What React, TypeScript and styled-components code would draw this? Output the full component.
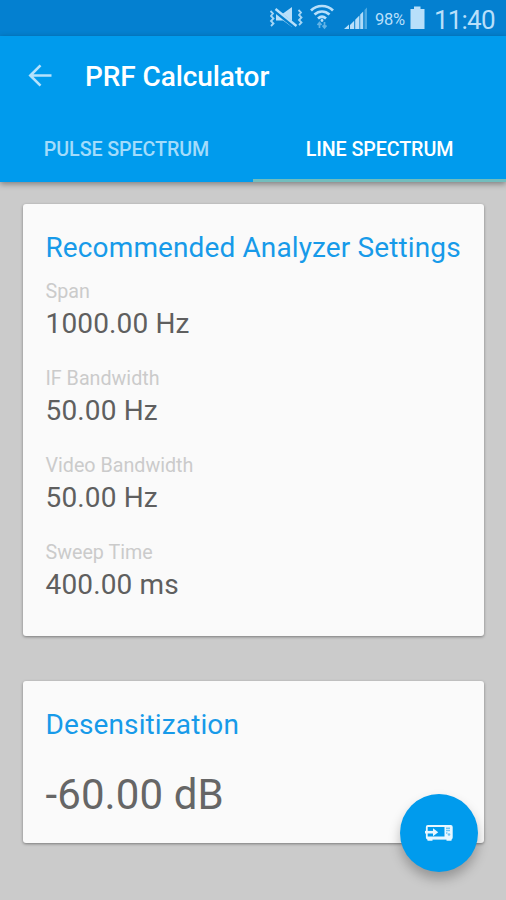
import React from 'react';
import styled, { createGlobalStyle } from 'styled-components';

const GlobalStyle = createGlobalStyle`
  * { box-sizing: border-box; }
  body { margin: 0; background: #cbcbcb; }
  button { border: 0; padding: 0; background: none; font: inherit; }
`;

const Screen = styled.div`
  position: relative;
  display: flex;
  flex-direction: column;
  width: 506px;
  height: 900px;
  overflow: hidden;
  background: #cbcbcb;
  font-family: Roboto, sans-serif;
`;

const StatusBar = styled.div`
  display: flex;
  align-items: center;
  justify-content: flex-end;
  height: 36px;
  padding-right: 11px;
  background: #0480d0;
  color: #b8dffa;
`;

const Gap = styled.span<{ $w: number }>`
  flex: none;
  width: ${(p) => p.$w}px;
`;

const StatusIcons = styled.svg`
  display: block;
  flex: none;
`;

const Battery = styled.span`
  width: 31px;
  margin-left: 7px;
  font-size: 16.5px;
  line-height: 36px;
  letter-spacing: -0.3px;
  padding-top: 3px;
`;

const Clock = styled.span`
  width: 61px;
  margin-left: 9px;
  font-size: 26px;
  line-height: 36px;
  padding-top: 3px;
  white-space: nowrap;
  letter-spacing: -0.8px;
`;

const Header = styled.header`
  position: relative;
  height: 146px;
  background: #009bed;
  box-shadow: 0 2px 6px rgba(0, 0, 0, 0.38);
`;

const Toolbar = styled.div`
  display: flex;
  align-items: center;
  height: 79px;
  padding-left: 28px;
`;

const BackButton = styled.button`
  display: flex;
  width: 57px;
`;

const Title = styled.h1`
  margin: 2px 0 0;
  color: #fff;
  font-size: 28px;
  font-weight: 500;
  line-height: 34px;
  letter-spacing: -0.1px;
`;

const Tabs = styled.nav`
  display: grid;
  grid-template-columns: 1fr 1fr;
  height: 67px;
`;

const Tab = styled.button<{ $active?: boolean }>`
  padding-top: 5px;
  color: ${(p) => (p.$active ? '#fff' : '#a3dcfb')};
  border-bottom: 3px solid ${(p) => (p.$active ? '#72bdbd' : 'transparent')};
  font-size: 19.7px;
  font-weight: 500;
  letter-spacing: -0.1px;
`;

const Content = styled.main`
  display: flex;
  flex-direction: column;
  gap: 45px;
  padding: 22px 22px 0 23px;
`;

const Card = styled.section<{ $height: number }>`
  height: ${(p) => p.$height}px;
  padding: 27px 22.5px 0;
  border-radius: 3px;
  background: #fafafa;
  box-shadow: 0 1px 3px rgba(0, 0, 0, 0.4);
`;

const CardTitle = styled.h2`
  margin: 0;
  color: #179ae9;
  font-size: 28px;
  font-weight: 400;
  line-height: 34px;
  letter-spacing: 0.12px;
  white-space: nowrap;
`;

const Settings = styled.dl`
  margin: 14px 0 0;
`;

const Setting = styled.div`
  height: 87px;
`;

const Label = styled.dt`
  color: #cbcbcb;
  font-size: 19.7px;
  line-height: 26px;
  letter-spacing: 0;
`;

const Value = styled.dd`
  margin: 2px 0 0;
  color: #5f5f5f;
  font-size: 28px;
  line-height: 34px;
  letter-spacing: 0.15px;
`;

const Reading = styled.p`
  margin: 28px 0 0;
  color: #666;
  font-size: 42px;
  line-height: 50px;
  letter-spacing: 0.1px;
`;

const Fab = styled.button`
  position: absolute;
  left: 400px;
  top: 794px;
  display: grid;
  place-items: center;
  width: 78px;
  height: 78px;
  border-radius: 50%;
  background: #009bed;
  box-shadow: 0 7px 12px rgba(0, 0, 0, 0.26);
`;

const settings = [
  ['Span', '1000.00 Hz'],
  ['IF Bandwidth', '50.00 Hz'],
  ['Video Bandwidth', '50.00 Hz'],
  ['Sweep Time', '400.00 ms'],
];

function MutedIcon() {
  return (
    <StatusIcons width="34" height="36" viewBox="0 0 34 36" fill="none">
      <path d="M7 13.500h7l9-6.500v20l-9-6.500H7z" fill="#b8dffa" />
      <path d="M5 9.500l21 17" stroke="#0480d0" strokeWidth="4.600" />
      <path d="M6.500 9l21 17" stroke="#b8dffa" strokeWidth="2.400" />
      <path d="M1.500 11l2.500 2.500L2 16l2.500 2.500L2 21l2.500 2.500L2 26M29.500 10l2.500 2.500L30 15l2.500 2.500L30 20l2.500 2.500L30 25" stroke="#a5d5f5" strokeWidth="1.800" />
    </StatusIcons>
  );
}

function WifiIcon() {
  return (
    <StatusIcons width="26" height="36" viewBox="0 0 26 36" fill="none" stroke="#b8dffa" strokeWidth="2.700">
      <path d="M2 10.500C8 4.500 18 4.500 24 10.500M5.500 14.500C10 10.500 16 10.500 20.500 14.500M9 18.500C11.500 16.300 14.500 16.300 17 18.500" />
      <circle cx="13" cy="20.500" r="1.400" fill="#b8dffa" stroke="none" />
      <path d="M10.500 28v-5M8.500 25l2-2.500 2 2.500M15.500 22v5M13.500 25.500l2 2.500 2-2.500" stroke="#62b3e6" strokeWidth="1.700" />
    </StatusIcons>
  );
}

function SignalIcon() {
  return (
    <StatusIcons width="24" height="36" viewBox="0 0 24 36">
      <path d="M0 29l5-4.500V29zM6 25l4.200-4.200V29H6zM11.200 19.800l4.200-4.200V29h-4.200z" fill="#b8dffa" />
      <path d="M16.200 14.500l3-3V29h-3z" fill="#b0dbf8" />
      <path d="M20.500 10L23 7.500V29h-2.500z" fill="#4eaae2" />
    </StatusIcons>
  );
}

function BatteryIcon() {
  return (
    <StatusIcons width="15" height="36" viewBox="0 0 15 36">
      <path d="M4 6.500h6.500v2.500H14.500v20H.500V9H4z" fill="#b8dffa" />
    </StatusIcons>
  );
}

function BackArrow() {
  return (
    <svg width="24" height="24" viewBox="0 0 24 24" fill="none" stroke="#b5e2fc" strokeWidth="2.600">
      <path d="M23.500 11.500H2.500M12.500 1.300L2.300 11.500 12.500 21.700" />
    </svg>
  );
}

function InstrumentIcon() {
  return (
    <svg width="28" height="18" viewBox="0 0 28 18" fill="none">
      <rect x="1.800" y="2" width="25" height="12.500" rx="1" stroke="#e8f7ff" strokeWidth="1.800" />
      <path d="M2 12.500h25v2.700H2zM2.500 15h5v1.800h-5zM21.500 15h5v1.800h-5z" fill="#e8f7ff" />
      <path d="M19.500 2h7v13h-7z" fill="#e8f7ff" />
      <path d="M21 4.200h4M21 6.500h4M21 9h1.500" stroke="#70c5f5" strokeWidth="1.400" />
      <circle cx="24" cy="10.500" r="1.300" fill="#70c5f5" />
      <path d="M0 8.200h11" stroke="#e8f7ff" strokeWidth="2.600" />
      <path d="M8 4.200l5.200 4-5.200 4z" fill="#e8f7ff" />
    </svg>
  );
}

export default function App() {
  return (
    <Screen>
      <GlobalStyle />
      <StatusBar>
        <MutedIcon />
        <Gap $w={6} />
        <WifiIcon />
        <Gap $w={9} />
        <SignalIcon />
        <Battery>98%</Battery>
        <Gap $w={4} />
        <BatteryIcon />
        <Clock>11:40</Clock>
      </StatusBar>
      <Header>
        <Toolbar>
          <BackButton aria-label="Back"><BackArrow /></BackButton>
          <Title>PRF Calculator</Title>
        </Toolbar>
        <Tabs>
          <Tab>PULSE SPECTRUM</Tab>
          <Tab $active>LINE SPECTRUM</Tab>
        </Tabs>
      </Header>
      <Content>
        <Card $height={432}>
          <CardTitle>Recommended Analyzer Settings</CardTitle>
          <Settings>
            {settings.map(([label, value]) => (
              <Setting key={label}>
                <Label>{label}</Label>
                <Value>{value}</Value>
              </Setting>
            ))}
          </Settings>
        </Card>
        <Card $height={162}>
          <CardTitle>Desensitization</CardTitle>
          <Reading>-60.00 dB</Reading>
        </Card>
      </Content>
      <Fab aria-label="Send to instrument"><InstrumentIcon /></Fab>
    </Screen>
  );
}
